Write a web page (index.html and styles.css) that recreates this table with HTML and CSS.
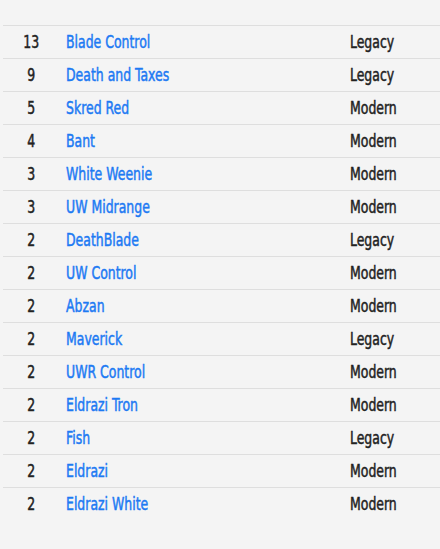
FILE: index.html
```html
<!DOCTYPE html>
<html>
<head>
<meta charset="utf-8">
<link rel="stylesheet" href="styles.css">
</head>
<body>
<div class="table">
  <div class="row"><span class="count"><span class="txt">13</span></span><span class="deck"><a class="txt" href="#">Blade Control</a></span><span class="format"><span class="txt">Legacy</span></span></div>
  <div class="row"><span class="count"><span class="txt">9</span></span><span class="deck"><a class="txt" href="#">Death and Taxes</a></span><span class="format"><span class="txt">Legacy</span></span></div>
  <div class="row"><span class="count"><span class="txt">5</span></span><span class="deck"><a class="txt" href="#">Skred Red</a></span><span class="format"><span class="txt">Modern</span></span></div>
  <div class="row"><span class="count"><span class="txt">4</span></span><span class="deck"><a class="txt" href="#">Bant</a></span><span class="format"><span class="txt">Modern</span></span></div>
  <div class="row"><span class="count"><span class="txt">3</span></span><span class="deck"><a class="txt" href="#">White Weenie</a></span><span class="format"><span class="txt">Modern</span></span></div>
  <div class="row"><span class="count"><span class="txt">3</span></span><span class="deck"><a class="txt" href="#">UW Midrange</a></span><span class="format"><span class="txt">Modern</span></span></div>
  <div class="row"><span class="count"><span class="txt">2</span></span><span class="deck"><a class="txt" href="#">DeathBlade</a></span><span class="format"><span class="txt">Legacy</span></span></div>
  <div class="row"><span class="count"><span class="txt">2</span></span><span class="deck"><a class="txt" href="#">UW Control</a></span><span class="format"><span class="txt">Modern</span></span></div>
  <div class="row"><span class="count"><span class="txt">2</span></span><span class="deck"><a class="txt" href="#">Abzan</a></span><span class="format"><span class="txt">Modern</span></span></div>
  <div class="row"><span class="count"><span class="txt">2</span></span><span class="deck"><a class="txt" href="#">Maverick</a></span><span class="format"><span class="txt">Legacy</span></span></div>
  <div class="row"><span class="count"><span class="txt">2</span></span><span class="deck"><a class="txt" href="#">UWR Control</a></span><span class="format"><span class="txt">Modern</span></span></div>
  <div class="row"><span class="count"><span class="txt">2</span></span><span class="deck"><a class="txt" href="#">Eldrazi Tron</a></span><span class="format"><span class="txt">Modern</span></span></div>
  <div class="row"><span class="count"><span class="txt">2</span></span><span class="deck"><a class="txt" href="#">Fish</a></span><span class="format"><span class="txt">Legacy</span></span></div>
  <div class="row"><span class="count"><span class="txt">2</span></span><span class="deck"><a class="txt" href="#">Eldrazi</a></span><span class="format"><span class="txt">Modern</span></span></div>
  <div class="row"><span class="count"><span class="txt">2</span></span><span class="deck"><a class="txt" href="#">Eldrazi White</a></span><span class="format"><span class="txt">Modern</span></span></div>
</div>
</body>
</html>
```
FILE: styles.css
```css
html, body {
  margin: 0;
  padding: 0;
  background: #f4f4f4;
}
body {
  font-family: "DejaVu Sans Condensed", "DejaVu Sans", sans-serif;
  font-size: 18px;
  font-weight: normal;
  color: #222;
}
.table {
  padding: 25px 0 0 3px;
}
.row {
  display: grid;
  grid-template-columns: 56px 290px 1fr;
  align-items: center;
  height: 30px;
  padding-bottom: 2px;
  border-top: 1px solid #dedede;
  white-space: nowrap;
}
.txt {
  display: inline-block;
  transform: scaleX(0.77);
  transform-origin: left center;
  line-height: 1;
  -webkit-text-stroke: 0.5px currentColor;
}
.count {
  text-align: center;
}
.count .txt {
  transform-origin: center center;
}
.deck {
  padding-left: 7px;
}
.deck a {
  color: #1d7af3;
  text-decoration: none;
}
.format {
  padding-left: 1px;
}
```
